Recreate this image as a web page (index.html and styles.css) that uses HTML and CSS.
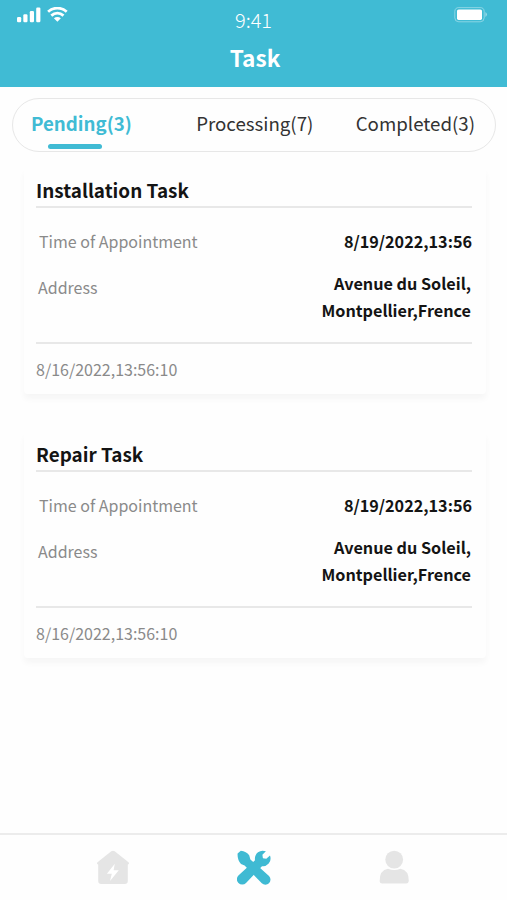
FILE: index.html
```html
<!DOCTYPE html>
<html lang="en">
<head>
<meta charset="utf-8">
<title>Task</title>
<link rel="stylesheet" href="styles.css">
</head>
<body>
<div class="screen">
  <header class="header">
    <div class="status">
      <svg class="signal" width="52" height="16" viewBox="0 0 52 16" fill="#fff">
        <rect x="0" y="10" width="4.2" height="5.2" rx="1.2"/>
        <rect x="6.3" y="7.3" width="4.2" height="7.9" rx="1.2"/>
        <rect x="12.8" y="4" width="4.2" height="11.2" rx="1.2"/>
        <rect x="19.2" y="0.5" width="4.2" height="14.7" rx="1.2"/>
        <g fill="none" stroke="#fff" stroke-width="2.8">
          <path d="M31.1 4.8C36.6 -.1 44.2 -.1 49.7 4.8"/>
          <path d="M34.3 8.6C38 5.4 42.8 5.4 46.5 8.6"/>
        </g>
        <path d="M36.9 11.3C39 9.6 41.8 9.6 43.9 11.3L40.4 14.7Z"/>
      </svg>
      <span class="clock">9:41</span>
      <svg class="battery" width="34" height="17" viewBox="0 0 34 17">
        <rect x=".8" y=".6" width="29.4" height="14.2" rx="4" fill="none" stroke="#fff" stroke-opacity=".38"/>
        <rect x="3" y="2.4" width="25" height="10.5" rx="1.6" fill="#fff"/>
        <path d="M31.4 5Q34.6 7.5 31.4 10Z" fill="#fff" fill-opacity=".45"/>
      </svg>
    </div>
    <h1 class="title">Task</h1>
  </header>
  <nav class="tabs">
    <span class="tab tab-active">Pending(3)</span>
    <span class="tab">Processing(7)</span>
    <span class="tab">Completed(3)</span>
  </nav>
  <main class="list">
    <section class="card">
      <h2 class="card-title">Installation Task</h2>
      <div class="details">
        <div class="row"><span class="label time">Time of Appointment</span><span class="value">8/19/2022,13:56</span></div>
        <div class="row address"><span class="label">Address</span><span class="value">Avenue du Soleil,<br>Montpellier,Frence</span></div>
      </div>
      <footer class="stamp">8/16/2022,13:56:10</footer>
    </section>
    <section class="card">
      <h2 class="card-title">Repair Task</h2>
      <div class="details">
        <div class="row"><span class="label time">Time of Appointment</span><span class="value">8/19/2022,13:56</span></div>
        <div class="row address"><span class="label">Address</span><span class="value">Avenue du Soleil,<br>Montpellier,Frence</span></div>
      </div>
      <footer class="stamp">8/16/2022,13:56:10</footer>
    </section>
  </main>
  <nav class="bottom-nav">
    <svg width="34" height="36" viewBox="0 0 34 36">
      <path d="M15.3 1.3Q17 0 18.7 1.3L32.8 12.4Q33.6 14.3 31.8 14.5V31Q31.8 34 28.8 34H5.2Q2.2 34 2.2 31V14.5Q.4 14.3 1.2 12.4Z" fill="#e5e5e5"/>
      <path d="M18.8 13.8L10.9 23.7H15.8L14 31L22.8 20.3H17.6Z" fill="#fff"/>
    </svg>
    <svg width="34" height="36" viewBox="0 0 34 36" fill="#3fbad3">
      <path d="M.6 3.6L3.8 .8Q9.4 1.4 12.2 5.2L13.4 9.4L32 26A5 5 0 0 1 24.8 33.2L7.6 15.6L4 14Q.2 10 .6 3.6Z"/>
      <path d="M28.9 1.3L25.4 4.8L25.9 8.2L29.3 8.8L33 5.6Q34.6 10.2 31.7 13.6Q28.7 16.8 25 16.2L9 32.9A5.3 5.3 0 0 1 1.4 25.4L18 10.2Q17.3 5.2 21 2.2Q24.5 -.4 28.9 1.3Z"/>
    </svg>
    <svg width="34" height="36" viewBox="0 0 34 36" fill="#e5e5e5">
      <circle cx="17.2" cy="9.6" r="8.9"/>
      <path d="M2.7 31Q2.4 20.3 11 18.8Q17.2 21.2 23.4 18.8Q32 20.3 31.8 31Q31.6 33.5 29 33.5H5.4Q2.7 33.5 2.7 31Z"/>
    </svg>
  </nav>
</div>
</body>
</html>
```
FILE: styles.css
```css
* { box-sizing: border-box; }
body {
  margin: 0;
  background: #fefefe;
  font-family: "Noto Sans CJK SC", "Noto Sans", sans-serif;
  color: #141414;
}
.screen {
  width: 507px;
  height: 900px;
  display: flex;
  flex-direction: column;
  overflow: hidden;
}
.header {
  height: 87px;
  flex: none;
  background: #40bbd4;
  color: #fff;
}
.status {
  height: 40px;
  padding: 7px 19px 0 17px;
  display: grid;
  grid-template-columns: 1fr auto 1fr;
}
.clock {
  padding-left: 2px;
  font-size: 20px;
  line-height: 25px;
  font-weight: 300;
}
.battery { justify-self: end; }
.title {
  margin: 0;
  padding-left: 3px;
  font-size: 22.6px;
  line-height: 35px;
  font-weight: 700;
  text-align: center;
}
.tabs {
  flex: none;
  height: 54px;
  margin: 11px 11px 0 12px;
  padding: 0 20px 0 18px;
  border: 1.5px solid #e7e7e7;
  border-radius: 27px;
  display: flex;
  justify-content: space-between;
}
.tab {
  font-size: 18.7px;
  line-height: 48px;
  color: #333;
}
.tab-active {
  color: #40bbd4;
  font-weight: 700;
  margin-right: 22px;
}
.tab-active::after {
  content: "";
  display: block;
  width: 54px;
  height: 5px;
  margin: -3px 0 0 17px;
  border-radius: 3px;
  background: #40bbd4;
}
.list {
  flex: 1;
  padding: 16px 21px 0 24px;
}
.card {
  height: 226px;
  margin-bottom: 38.4px;
  padding: 0 14px 0 12px;
  border-radius: 4px;
  box-shadow: 0 5px 6px rgba(0, 0, 0, .035);
  background: #fefefe;
}
.card-title {
  height: 40px;
  margin: 0;
  border-bottom: 2px solid #e8e8e8;
  font-size: 18.9px;
  line-height: 43px;
  font-weight: 700;
}
.details {
  height: 136px;
  padding: 18px 0 0 2px;
  border-bottom: 2px solid #e8e8e8;
}
.row {
  display: flex;
  justify-content: space-between;
  font-size: 16px;
  line-height: 30px;
}
.label { color: #8a8a8a; }
.time { padding-left: 1px; }
.value {
  font-size: 16.2px;
  font-weight: 700;
  text-align: right;
}
.address { margin-top: 16px; padding-right: 1px; }
.address .value { line-height: 27px; margin-top: -2px; }
.stamp {
  font-size: 16px;
  line-height: 51px;
  color: #8a8a8a;
}
.bottom-nav {
  flex: none;
  height: 67px;
  padding: 15px 96px 0;
  border-top: 2px solid #ececec;
  display: flex;
  justify-content: space-between;
}
```
